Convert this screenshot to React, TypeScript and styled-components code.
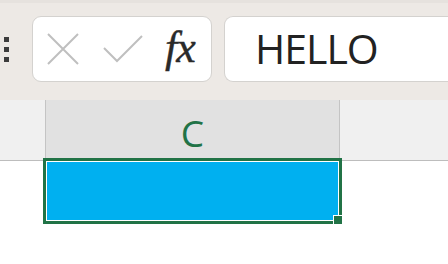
import styled, { createGlobalStyle } from "styled-components"

const GlobalStyle = createGlobalStyle`
  html, body {
    margin: 0;
    padding: 0;
    background: #ffffff;
  }
  body {
    font-family: "Open Sans", "Noto Sans", sans-serif;
  }
`

export default function App() {
  return (
    <>
      <GlobalStyle />
      <Page>
        <FormulaBar>
          <Grip>
            <Dot />
            <Dot />
            <Dot />
          </Grip>
          <ActionBox>
            <IconSlot>
              <svg width="32" height="32" viewBox="0 0 32 32">
                <path d="M1 1 L31 31 M31 1 L1 31" stroke="#bfbfbf" strokeWidth="2" fill="none" />
              </svg>
            </IconSlot>
            <IconSlot>
              <svg width="40" height="28" viewBox="0 0 40 28">
                <path d="M1 13 L14 26 L39 1" stroke="#bfbfbf" strokeWidth="2" fill="none" />
              </svg>
            </IconSlot>
            <Fx>fx</Fx>
          </ActionBox>
          <FormulaInput>HELLO</FormulaInput>
        </FormulaBar>
        <HeaderRow>
          <Corner />
          <ColHeader active>C</ColHeader>
          <ColHeader />
        </HeaderRow>
        <SheetBody>
          <Selection>
            <FillHandle />
          </Selection>
        </SheetBody>
      </Page>
    </>
  )
}

const Page = styled.div`
  width: 448px;
  height: 264px;
  overflow: hidden;
  background: #ffffff;
`

const FormulaBar = styled.div`
  display: flex;
  align-items: flex-start;
  height: 100px;
  box-sizing: border-box;
  padding: 16px 0 0 4px;
  background: #ede9e5;
  border-top: 3px solid #e6e2de;
`

const Grip = styled.div`
  display: flex;
  flex-direction: column;
  gap: 5px;
  margin-top: 18px;
  width: 28px;
`

const Dot = styled.div`
  width: 5px;
  height: 5px;
  background: #3c3c3c;
`

const ActionBox = styled.div`
  display: flex;
  align-items: center;
  width: 180px;
  height: 66px;
  box-sizing: border-box;
  margin-top: -3px;
  padding: 0 10px 0 14px;
  background: #ffffff;
  border: 1px solid #d4d2cf;
  border-radius: 9px;
`

const IconSlot = styled.div`
  display: flex;
  align-items: center;
  margin-right: 24px;

  & + & {
    margin-right: 22px;
  }
`

const Fx = styled.span`
  font-family: "Liberation Serif", "DejaVu Serif", serif;
  font-style: italic;
  font-size: 44px;
  color: #2a2a2a;
  letter-spacing: -1px;
  line-height: 1;
  margin-top: -2px;
  -webkit-text-stroke: 0.4px #2a2a2a;
`

const FormulaInput = styled.div`
  flex: 1;
  display: flex;
  align-items: center;
  height: 66px;
  box-sizing: border-box;
  margin: -3px 0 0 12px;
  padding: 0 0 2px 30px;
  background: #ffffff;
  border: 1px solid #d4d2cf;
  border-right: none;
  border-radius: 9px 0 0 9px;
  font-family: "Open Sans", "Noto Sans", sans-serif;
  font-size: 41px;
  color: #222222;
  letter-spacing: -1px;
`

const HeaderRow = styled.div`
  display: flex;
  height: 61px;
  box-sizing: border-box;
  background: #f0f0f0;
  border-bottom: 1px solid #bdbdbd;
`

const Corner = styled.div`
  width: 45px;
  border-right: 1px solid #c4c4c4;
`

const ColHeader = styled.div<{ active?: boolean }>`
  display: flex;
  align-items: center;
  justify-content: center;
  width: ${(p) => (p.active ? "293px" : "auto")};
  flex: ${(p) => (p.active ? "none" : "1")};
  background: ${(p) => (p.active ? "#e1e1e1" : "#f0f0f0")};
  border-right: ${(p) => (p.active ? "1px solid #c4c4c4" : "none")};
  color: #217346;
  font-family: "Open Sans", "Noto Sans", sans-serif;
  font-size: 37px;
  padding-top: 4px;
`

const SheetBody = styled.div`
  position: relative;
  height: 103px;
`

const Selection = styled.div`
  position: absolute;
  left: 43px;
  top: -3px;
  width: 299px;
  height: 66px;
  box-sizing: border-box;
  border: 3px solid #217346;
  background: #00b0f0;
  box-shadow: inset 0 0 0 1px #ffffff;
`

const FillHandle = styled.div`
  position: absolute;
  right: -4px;
  bottom: -4px;
  width: 8px;
  height: 8px;
  background: #217346;
  border: 1px solid #ffffff;
`
